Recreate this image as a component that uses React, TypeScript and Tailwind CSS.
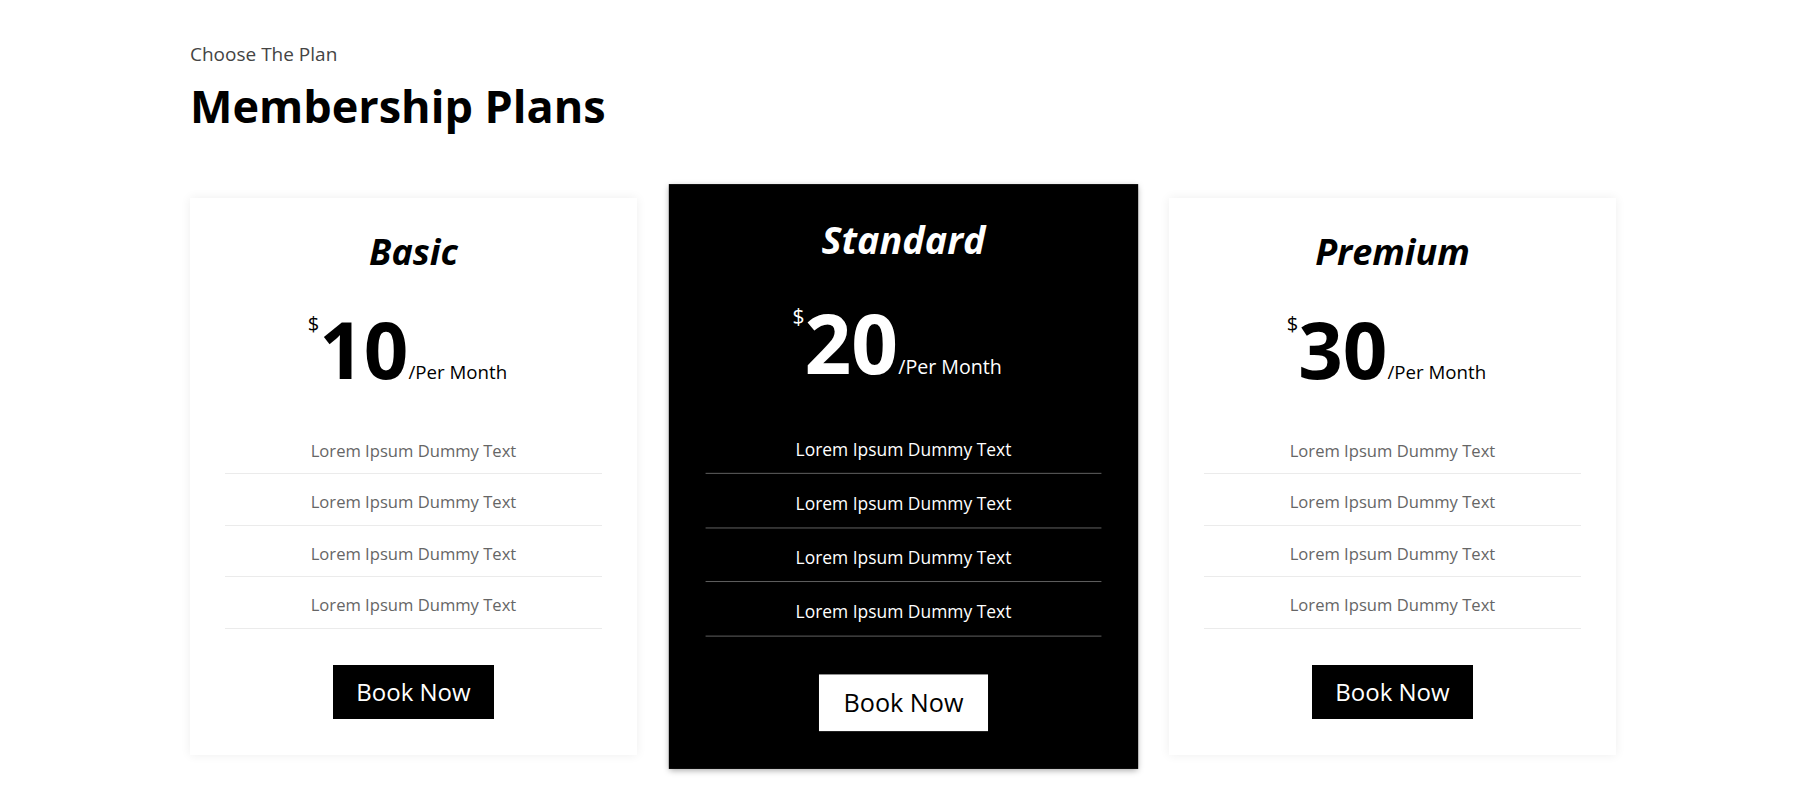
import React from "react";

type Plan = {
  name: string;
  price: string;
  featured?: boolean;
};

const plans: Plan[] = [
  { name: "Basic", price: "10" },
  { name: "Standard", price: "20", featured: true },
  { name: "Premium", price: "30" },
];

const features = [
  "Lorem Ipsum Dummy Text",
  "Lorem Ipsum Dummy Text",
  "Lorem Ipsum Dummy Text",
  "Lorem Ipsum Dummy Text",
];

function PlanCard({ plan }: { plan: Plan }) {
  const dark = !!plan.featured;
  return (
    <div
      className={
        dark
          ? "flex flex-col items-center bg-black text-white scale-105 shadow-[0_2px_6px_rgba(0,0,0,0.35)] px-[35px] pt-[36px] pb-[36px]"
          : "flex flex-col items-center bg-white text-black shadow-[0_0_10px_rgba(0,0,0,0.07)] px-[35px] pt-[36px] pb-[36px]"
      }
    >
      <h3 className="text-[36px] leading-none font-bold italic">{plan.name}</h3>

      {/* price */}
      <div className="mt-[40px] mr-[12px] flex items-start h-[78.5px]">
        <span className="text-[20px] leading-none mt-[4px]">$</span>
        <span className="text-[78px] leading-none font-bold">{plan.price}</span>
        <span className="text-[18.7px] leading-none self-end mb-[6.5px]">
          /Per Month
        </span>
      </div>

      <ul className="mt-[34px] w-full">
        {features.map((f, i) => (
          <li
            key={i}
            className={
              dark
                ? "text-center text-[16.6px] leading-[17px] pt-[19px] pb-[14.5px] border-b border-[#5c5c5c] text-white"
                : "text-center text-[16.6px] leading-[17px] pt-[19px] pb-[14.5px] border-b border-[#ebebeb] text-[#666]"
            }
          >
            {f}
          </li>
        ))}
      </ul>

      <button
        className={
          dark
            ? "mt-[36px] h-[54px] px-[23px] bg-white text-black text-[24px] leading-none"
            : "mt-[36px] h-[54px] px-[23px] bg-black text-white text-[24px] leading-none"
        }
      >
        Book Now
      </button>
    </div>
  );
}

export default function App() {
  return (
    <div
      className="min-h-[803px] bg-white pl-[190px] pt-[45px]"
      style={{ fontFamily: '"Open Sans", "Noto Sans", sans-serif' }}
    >
      <p className="text-[19px] leading-none text-[#444]">Choose The Plan</p>
      <h1 className="mt-[19px] text-[45px] leading-none font-bold text-black">
        Membership Plans
      </h1>

      <div className="mt-[70px] w-[1426px] grid grid-cols-3 gap-x-[42.5px] items-start">
        {plans.map((p) => (
          <PlanCard key={p.name} plan={p} />
        ))}
      </div>
    </div>
  );
}
